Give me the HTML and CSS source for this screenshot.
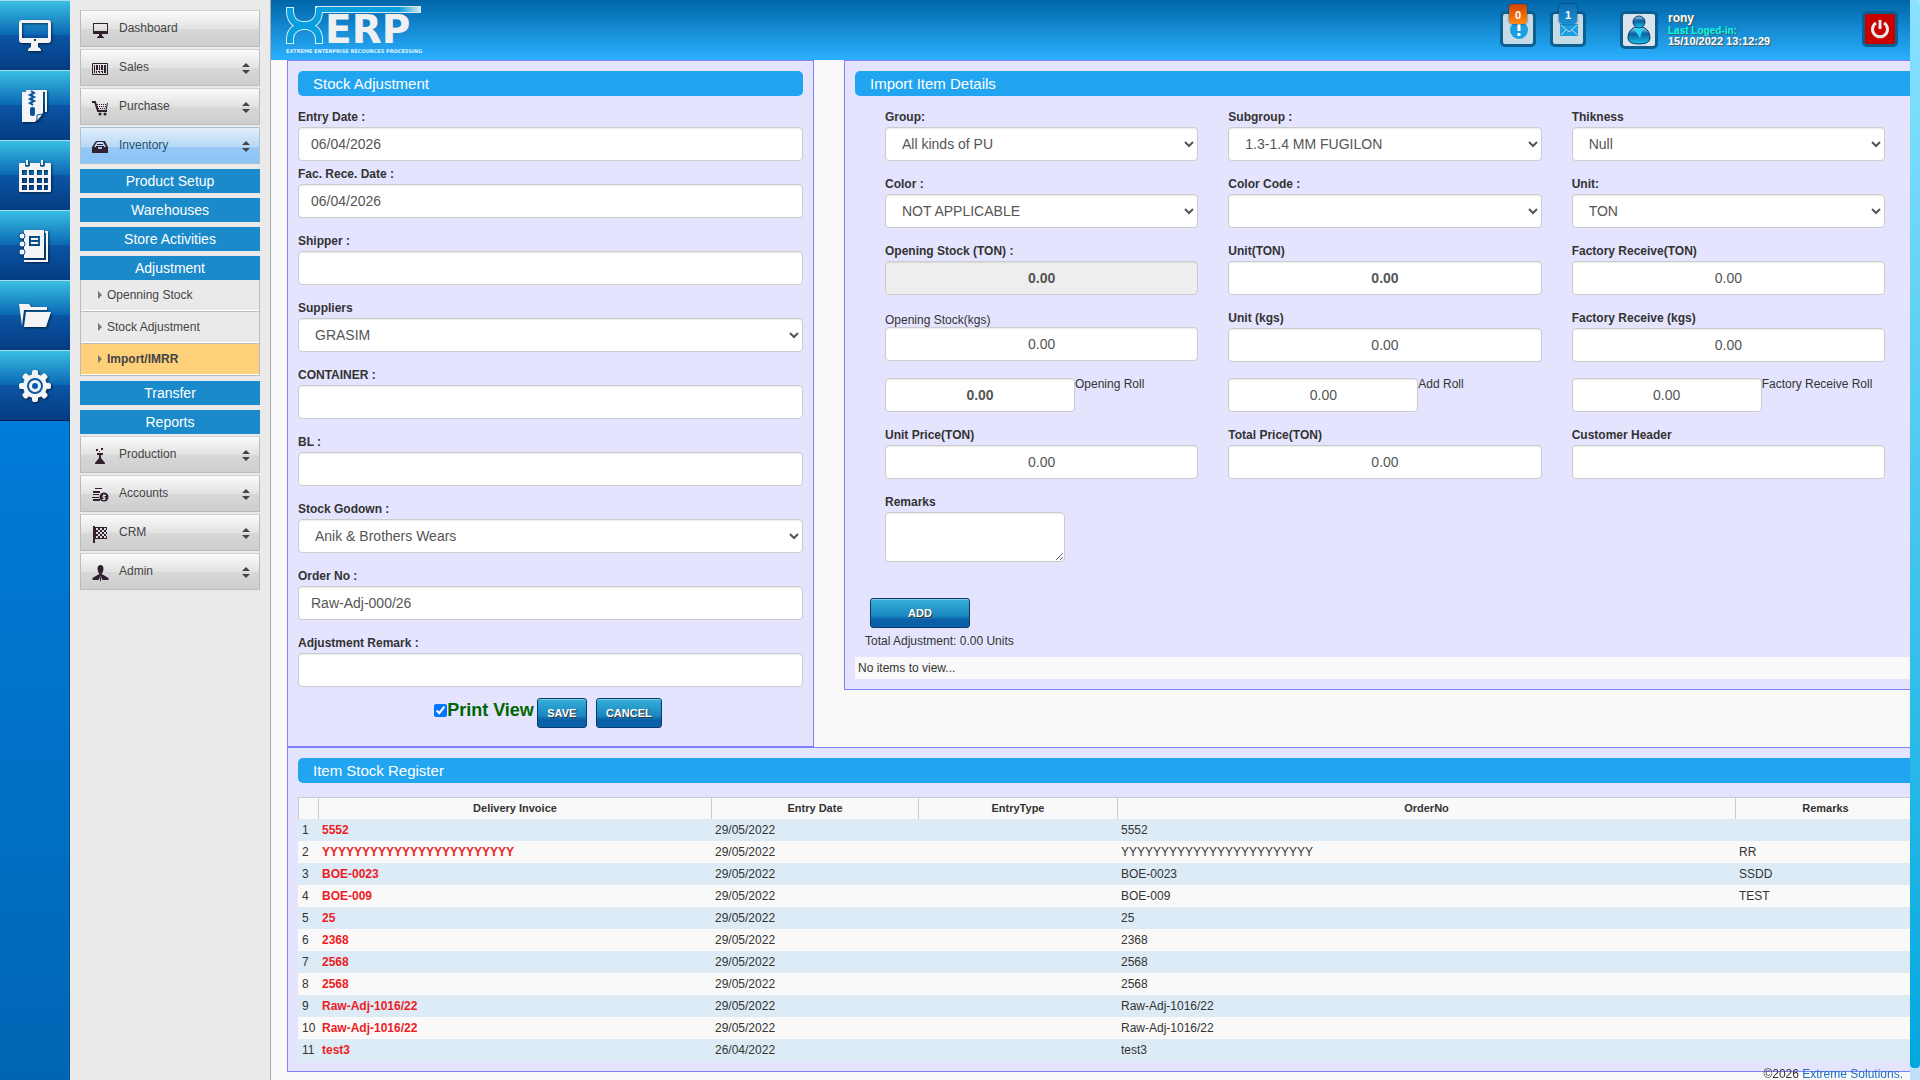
FILE: index.html
```html
<!DOCTYPE html>
<html lang="en">
<head>
  <meta charset="UTF-8">
  <title>XERP - Import/IMRR</title>
  <link rel="stylesheet" href="styles.css">
</head>
<body>
  <div class="page">
    <!-- Main icon bar -->
    <nav class="icon-bar">
      <a href="#" aria-label="Desktop"><svg width="34" height="34" viewBox="0 0 34 34"><path fill="#f4f4f6" fill-rule="evenodd" d="M4 1h26q3 0 3 3v17q0 3-3 3H20v4q3 1 3 4H10q0-3 3-4v-4H4q-3 0-3-3V4q0-3 3-3zM4 4v15h26V4zM16 20v2h2v-2z"/></svg></a>
      <a href="#" aria-label="Archive"><svg width="34" height="34" viewBox="0 0 34 34"><path fill="none" stroke="#f4f4f6" stroke-width="2" d="M8 2h20v21"/><path fill="#f4f4f6" d="M4 3h21v21l-8 9H4z"/><path fill="#f4f4f6" stroke="#0a529c" stroke-width="1" d="M19 32v-6l6-1z"/><path stroke="#0a529c" stroke-width="2" fill="none" d="M13 2l3 2-4 2 4 2-4 2 4 2-4 2 3 2"/><rect x="12" y="18" width="5" height="9" rx="2" fill="#0a529c"/></svg></a>
      <a href="#" aria-label="Calendar"><svg width="34" height="34" viewBox="0 0 34 34"><path fill="#f4f4f6" fill-rule="evenodd" d="M2 4h5v3q2 2 5 0V4h10v3q2 2 5 0V4h5q1 0 1 1v27q0 1-1 1H2q-1 0-1-1V5q0-1 1-1zM4 11v5h5v-5zm7 0v5h5v-5zm8 0v5h5v-5zm7 0v5h4v-5zM4 19v5h5v-5zm7 0v5h5v-5zm8 0v5h5v-5zm7 0v5h4v-5zM4 26v5h5v-5zm7 0v5h5v-5zm8 0v5h5v-5zm7 0v5h4v-5z"/><path stroke="#f4f4f6" stroke-width="2" d="M9 1v5M24 1v5"/></svg></a>
      <a href="#" aria-label="Address book"><svg width="34" height="34" viewBox="0 0 34 34"><path fill="#f4f4f6" fill-rule="evenodd" d="M6 1h20v28H6zM11 7v10h11V7z"/><path fill="none" stroke="#f4f4f6" stroke-width="2" d="M27 3h2v29H6"/><path stroke="#f4f4f6" stroke-width="2" d="M13 10h7M13 14h7"/><g fill="#f4f4f6" stroke="#0a529c" stroke-width="1"><circle cx="4" cy="7" r="3"/><circle cx="4" cy="15" r="3"/><circle cx="4" cy="23" r="3"/></g></svg></a>
      <a href="#" aria-label="Files"><svg width="34" height="34" viewBox="0 0 34 34"><path fill="#f4f4f6" d="M1 5h10l2 3h16v3H6L4 27z"/><path fill="#f4f4f6" d="M8 13h25l-5 15H6z"/></svg></a>
      <a href="#" aria-label="Settings"><svg width="34" height="34" viewBox="0 0 34 34"><g fill="#f4f4f6"><rect x="14" y="1" width="6" height="32" rx="2"/><rect x="14" y="1" width="6" height="32" rx="2" transform="rotate(45 17 17)"/><rect x="14" y="1" width="6" height="32" rx="2" transform="rotate(90 17 17)"/><rect x="14" y="1" width="6" height="32" rx="2" transform="rotate(135 17 17)"/><circle cx="17" cy="17" r="12"/></g><circle cx="17" cy="17" r="7" fill="none" stroke="#0a5ca8" stroke-width="2"/><circle cx="17" cy="17" r="3" fill="#0a5ca8"/></svg></a>
    </nav>

    <!-- Side menu -->
    <nav class="side-menu">
      <a href="#" class="menu-item"><svg class="menu-icon" viewBox="0 0 17 17"><path fill-rule="evenodd" d="M1 1h15v11H1zM2 2v7h13V2zM6 14h5v1h1v1H5v-1h1zM7 12h3v2H7z"/></svg>Dashboard</a>
      <a href="#" class="menu-item"><svg class="menu-icon" viewBox="0 0 17 17"><path fill="none" stroke="#33202f" d="M.5 2.5h15v11H.5z"/><path d="M2 4h1v8H2zM4 4h2v5H4zM7 4h1v5H7zM9 4h2v5H9zM12 4h2v8h-2zM4 10h1v2H4zM6 10h2v1H6zM9 10h2v1H9zM7 11h1v1H7zM10 11h1v1h-1z"/></svg>Sales<span class="arrows"></span></a>
      <a href="#" class="menu-item"><svg class="menu-icon" viewBox="0 0 17 17"><path fill="none" stroke="#33202f" stroke-width="2" d="M0 2h3l3 9h9"/><path fill="none" stroke="#33202f" stroke-dasharray="1 1" d="M5 4.500h10M5 6.500h10M6 8.500h8"/><path fill="none" stroke="#33202f" d="M15.500 3L14 10"/><circle cx="8" cy="14" r="1.500"/><circle cx="13" cy="14" r="1.500"/></svg>Purchase<span class="arrows"></span></a>
      <a href="#" class="menu-item active"><svg class="menu-icon" viewBox="0 0 17 17"><path fill-rule="evenodd" d="M4 2h9l3 6v6H0V8zM5 3L2 8h4v2h4V8h4l-3-5zM5 5h6v1H5zM4 7h8v1H4z"/></svg>Inventory<span class="arrows"></span></a>

      <a href="#" class="group-item">Product Setup</a>
      <a href="#" class="group-item">Warehouses</a>
      <a href="#" class="group-item">Store Activities</a>
      <a href="#" class="group-item">Adjustment</a>
      <div class="sub-menu">
        <a href="#">Openning Stock</a>
        <a href="#">Stock Adjustment</a>
        <a href="#" class="current">Import/IMRR</a>
      </div>
      <a href="#" class="group-item">Transfer</a>
      <a href="#" class="group-item">Reports</a>

      <a href="#" class="menu-item"><svg class="menu-icon" viewBox="0 0 17 17"><path d="M5 5h6v2H9v3l4 5v1H3v-1l4-5V7H5zM4 1h2v2H4zM9 0h2v2H9zM7 3h1v1H7z"/></svg>Production<span class="arrows"></span></a>
      <a href="#" class="menu-item"><svg class="menu-icon" viewBox="0 0 17 17"><path d="M3 1h7v1H3zM1 4h7v2H1zM1 7h6v1H1zM0 10h7v1H0zM1 12h7v2H1z"/><circle cx="12" cy="10" r="4.500"/><path fill="none" stroke="#ddd" d="M14 8.500h-3v2h2v2h-3M12 7v6"/></svg>Accounts<span class="arrows"></span></a>
      <a href="#" class="menu-item"><svg class="menu-icon" viewBox="0 0 17 17"><path d="M1 0h2v17H1zM3 1h12v12H3z"/><path fill="none" stroke="#ddd" stroke-width="2" stroke-dasharray="2 2" d="M4 3h10M6 5h9M4 7h10M6 9h9M4 11h10"/></svg>CRM<span class="arrows"></span></a>
      <a href="#" class="menu-item"><svg class="menu-icon" viewBox="0 0 17 17"><path d="M8.500 0q3 0 3 4 0 3-2 5l2 1 5 3v2h-6l-2-4-2 4h-6v-2l5-3 2-1q-2-2-2-5 0-4 3-4zM8 12h1v4H8z"/></svg>Admin<span class="arrows"></span></a>
    </nav>

    <main class="content">
      <header class="top-bar">
        <svg class="logo" width="156" height="60" viewBox="0 0 156 60" role="img" aria-label="XERP">
          <defs>
            <linearGradient id="bar" x1="0" x2="1"><stop offset="0" stop-color="#089fde"/><stop offset=".8" stop-color="#089fde"/><stop offset="1" stop-color="#d5e8f2"/></linearGradient>
          </defs>
          <g fill="none" stroke="#d8ecf6" stroke-width="8"><path d="M10 7v5q1 12 12 13h5q11-1 12-13V7M10 44v-6q1-10 12-12h5q11 2 12 12v6"/></g>
          <rect x="35" y="6" width="106" height="7" fill="#d5e8f2"/>
          <g fill="none" stroke="#089fde" stroke-width="6"><path d="M10 8v4q1 12 12 13h5q11-1 12-13V8M10 43v-5q1-10 12-12h5q11 2 12 12v5"/></g>
          <rect x="37" y="7" width="103" height="5" fill="url(#bar)"/>
          <text class="logo-text" x="45" y="43">ERP</text>
          <text class="logo-tag" x="6" y="53">EXTREME ENTERPRISE RECOURCES PROCESSING</text>
        </svg>

        <div class="top-tools">
          <a href="#" class="tool" aria-label="Notifications"><svg width="30" height="30" viewBox="0 0 30 30"><circle cx="16" cy="16" r="9" fill="#1a9fe0"/><path stroke="#fff" stroke-width="3" d="M16 10v7M16 19v3"/></svg><span class="badge orange">0</span></a>
          <a href="#" class="tool" aria-label="Messages"><svg width="30" height="30" viewBox="0 0 30 30"><rect x="7" y="10" width="18" height="12" fill="#1a9fe0"/><path fill="none" stroke="#c5dbe6" d="M8 11l8 7 8-7M8 21l5-5M24 21l-5-5"/></svg><span class="badge blue">1</span></a>
          <div class="avatar"><svg width="32" height="32" viewBox="0 0 32 32">
            <defs><linearGradient id="man" x2="0" y2="1"><stop offset="0" stop-color="#9fe0f6"/><stop offset=".4" stop-color="#0b5ea0"/><stop offset="1" stop-color="#19c5e8"/></linearGradient></defs>
            <path d="M5 24q0-8 7-11h8q7 3 7 11 0 6-11 6T5 24z" fill="url(#man)" stroke="#0a3768"/><circle cx="16" cy="8" r="6" fill="url(#man)" stroke="#0a3768"/><path d="M11 15l6 9 3-10z" fill="#26d7f4"/></svg></div>
          <div class="user-info">
            <strong>rony</strong>
            <span class="last">Last Loged-in:</span>
            <span>15/10/2022 13:12:29</span>
          </div>
          <a href="#" class="power" aria-label="Log out"><svg width="20" height="20" viewBox="0 0 20 20"><path fill="none" stroke="#e8e8e8" stroke-width="3" d="M6 4a7.500 7.500 0 1 0 8 0M10 1v9"/></svg></a>
        </div>
      </header>

      <div class="forms">
        <form class="panel">
          <h2>Stock Adjustment</h2>
          <div class="field tight"><label for="entry">Entry Date :</label><input type="text" id="entry" value="06/04/2026"></div>
          <div class="field"><label for="rece">Fac. Rece. Date :</label><input type="text" id="rece" value="06/04/2026"></div>
          <div class="field"><label for="shipper">Shipper :</label><input type="text" id="shipper"></div>
          <div class="field"><label for="suppliers">Suppliers</label><select id="suppliers"><option>GRASIM</option></select></div>
          <div class="field"><label for="container">CONTAINER :</label><input type="text" id="container"></div>
          <div class="field"><label for="bl">BL :</label><input type="text" id="bl"></div>
          <div class="field"><label for="godown">Stock Godown :</label><select id="godown"><option>Anik &amp; Brothers Wears</option></select></div>
          <div class="field"><label for="order">Order No :</label><input type="text" id="order" value="Raw-Adj-000/26"></div>
          <div class="field tight"><label for="remark">Adjustment Remark :</label><input type="text" id="remark"></div>
          <div class="actions">
            <div class="print"><input type="checkbox" id="print" checked><label for="print">Print View</label></div>
            <button type="button" class="btn">SAVE</button>
            <button type="button" class="btn cancel">CANCEL</button>
          </div>
        </form>

        <form class="panel">
          <h2>Import Item Details</h2>
          <div class="item-grid">
            <div class="field"><label for="group">Group:</label><select id="group"><option>All kinds of PU</option></select></div>
            <div class="field"><label for="subgroup">Subgroup :</label><select id="subgroup"><option>1.3-1.4 MM FUGILON</option></select></div>
            <div class="field"><label for="thikness">Thikness</label><select id="thikness"><option>Null</option></select></div>

            <div class="field"><label for="color">Color :</label><select id="color"><option>NOT APPLICABLE</option></select></div>
            <div class="field"><label for="code">Color Code :</label><select id="code"><option></option></select></div>
            <div class="field"><label for="unit">Unit:</label><select id="unit"><option>TON</option></select></div>

            <div class="field num"><label for="open-ton">Opening Stock (TON) :</label><input type="text" id="open-ton" class="bold" value="0.00" readonly></div>
            <div class="field num"><label for="unit-ton">Unit(TON)</label><input type="text" id="unit-ton" class="bold" value="0.00"></div>
            <div class="field num"><label for="fac-ton">Factory Receive(TON)</label><input type="text" id="fac-ton" value="0.00"></div>

            <div class="field num plain"><label for="open-kgs">Opening Stock(kgs)</label><input type="text" id="open-kgs" value="0.00"></div>
            <div class="field num"><label for="unit-kgs">Unit (kgs)</label><input type="text" id="unit-kgs" value="0.00"></div>
            <div class="field num"><label for="fac-kgs">Factory Receive (kgs)</label><input type="text" id="fac-kgs" value="0.00"></div>

            <div class="roll num"><input type="text" id="open-roll" class="bold" value="0.00"><label for="open-roll">Opening Roll</label></div>
            <div class="roll num"><input type="text" id="add-roll" value="0.00"><label for="add-roll">Add Roll</label></div>
            <div class="roll num"><input type="text" id="fac-roll" value="0.00"><label for="fac-roll">Factory Receive Roll</label></div>

            <div class="field num"><label for="unit-price">Unit Price(TON)</label><input type="text" id="unit-price" value="0.00"></div>
            <div class="field num"><label for="total-price">Total Price(TON)</label><input type="text" id="total-price" value="0.00"></div>
            <div class="field"><label for="customer">Customer Header</label><input type="text" id="customer"></div>

            <div class="field"><label for="remarks">Remarks</label><textarea id="remarks"></textarea></div>
          </div>
          <button type="button" class="btn add">ADD</button>
          <p class="total">Total Adjustment: 0.00 Units</p>
          <p class="empty">No items to view...</p>
        </form>
      </div>

      <section class="panel register">
        <h2>Item Stock Register</h2>
        <table>
          <colgroup><col class="c-no"><col class="c-invoice"><col class="c-date"><col class="c-type"><col class="c-order"><col></colgroup>
          <thead>
            <tr><th></th><th>Delivery Invoice</th><th>Entry Date</th><th>EntryType</th><th>OrderNo</th><th>Remarks</th></tr>
          </thead>
          <tbody>
            <tr><td>1</td><td><a href="#">5552</a></td><td>29/05/2022</td><td></td><td>5552</td><td></td></tr>
            <tr><td>2</td><td><a href="#">YYYYYYYYYYYYYYYYYYYYYYYY</a></td><td>29/05/2022</td><td></td><td>YYYYYYYYYYYYYYYYYYYYYYYY</td><td>RR</td></tr>
            <tr><td>3</td><td><a href="#">BOE-0023</a></td><td>29/05/2022</td><td></td><td>BOE-0023</td><td>SSDD</td></tr>
            <tr><td>4</td><td><a href="#">BOE-009</a></td><td>29/05/2022</td><td></td><td>BOE-009</td><td>TEST</td></tr>
            <tr><td>5</td><td><a href="#">25</a></td><td>29/05/2022</td><td></td><td>25</td><td></td></tr>
            <tr><td>6</td><td><a href="#">2368</a></td><td>29/05/2022</td><td></td><td>2368</td><td></td></tr>
            <tr><td>7</td><td><a href="#">2568</a></td><td>29/05/2022</td><td></td><td>2568</td><td></td></tr>
            <tr><td>8</td><td><a href="#">2568</a></td><td>29/05/2022</td><td></td><td>2568</td><td></td></tr>
            <tr><td>9</td><td><a href="#">Raw-Adj-1016/22</a></td><td>29/05/2022</td><td></td><td>Raw-Adj-1016/22</td><td></td></tr>
            <tr><td>10</td><td><a href="#">Raw-Adj-1016/22</a></td><td>29/05/2022</td><td></td><td>Raw-Adj-1016/22</td><td></td></tr>
            <tr><td>11</td><td><a href="#">test3</a></td><td>26/04/2022</td><td></td><td>test3</td><td></td></tr>
          </tbody>
        </table>
      </section>
    </main>

    <div class="scroll-track"><div class="scroll-thumb"></div></div>
  </div>

  <footer>©2026 <a href="#">Extreme Solutions.</a></footer>
</body>
</html>
```
FILE: styles.css
```css
* {
  box-sizing: border-box;
}

body {
  margin: 0;
  font-family: "Liberation Sans", Arial, sans-serif;
  font-size: 12px;
  line-height: 18px;
  color: #333;
  background: #f9f9f9;
}

a {
  color: inherit;
  text-decoration: none;
}

.page {
  display: flex;
  min-height: 100vh;
}

/* icon bar */
.icon-bar {
  flex: 0 0 70px;
  background: linear-gradient(#008af0, #0066b4);
  box-shadow: inset -1px 0 #00509a;
}

.icon-bar a {
  display: flex;
  align-items: center;
  justify-content: center;
  height: 70px;
  border-top: 1px solid #a9dcf2;
  background: linear-gradient(#38bfe2, #0b68b4 49%, #0b55a4 50%, #043c82);
}

.icon-bar a:last-child {
  height: 71px;
  border-bottom: 1px solid #04224a;
}

.icon-bar svg {
  filter: drop-shadow(1px 1px 1px rgba(0, 0, 0, 0.6));
}

/* side menu */
.side-menu {
  flex: 0 0 201px;
  padding: 10px 10px 0;
  background: #eaeaea;
  border-right: 1px solid #aaa;
}

.menu-item {
  display: flex;
  align-items: center;
  height: 37px;
  margin-bottom: 2px;
  padding: 0 9px 2px 11px;
  border: 1px solid #bbb;
  border-top-color: #d0d0d0;
  background: linear-gradient(#fbfbfb, #e2e2e2 50%, #d8d8d8 51%, #cecece);
  color: #444;
}

.menu-item.active {
  margin-bottom: 5px;
  border-color: #a9c4d0;
  background: linear-gradient(#e2effa, #b5d7f5 55%, #95c8f6 56%, #8cc3f7);
  color: #1b5272;
}

.menu-icon {
  width: 17px;
  height: 17px;
  margin: 5px 10px 0 0;
  fill: #33202f;
}

.arrows {
  margin: 4px 0 0 auto;
}

.arrows::before,
.arrows::after {
  content: '';
  display: block;
  border: 4px solid transparent;
  border-top-width: 0;
  border-bottom-color: #444;
}

.arrows::after {
  margin-top: 3px;
  border-width: 4px 4px 0;
  border-top-color: #444;
}

.group-item {
  display: block;
  height: 24px;
  margin-bottom: 5px;
  background: #1a8acb;
  color: #fff;
  font-size: 14px;
  line-height: 24px;
  text-align: center;
}

.group-item:has(+ .sub-menu) {
  margin-bottom: 0;
}

.group-item:has(+ .menu-item) {
  margin-bottom: 2px;
}

.sub-menu {
  margin-bottom: 5px;
  border: 1px solid #bbb;
  border-width: 0 1px;
}

.sub-menu a {
  display: flex;
  align-items: center;
  gap: 5px;
  height: 32px;
  padding: 0 0 2px 17px;
  border-bottom: 1px solid #bbb;
  box-shadow: inset 0 -1px #fff;
  color: #444;
}

.sub-menu a::before {
  content: '';
  border: 4px solid transparent;
  border-left-color: #777;
  border-right-width: 0;
}

.sub-menu .current {
  background: #ffd07a;
  font-weight: bold;
}

/* header */
.content {
  flex: 1;
  min-width: 0;
  overflow: hidden;
}

.top-bar {
  display: flex;
  justify-content: space-between;
  height: 60px;
  padding: 0 12px 0 9px;
  background: linear-gradient(#0066a8, #2bb0ff);
}

.logo-text {
  font: bold 39px "DejaVu Sans", sans-serif;
  fill: #f0f0f2;
}

.logo-tag {
  font: bold 5px "DejaVu Sans", sans-serif;
  fill: #dff2ff;
}

.top-tools {
  display: flex;
  align-items: flex-start;
  padding-top: 11px;
}

.tool {
  position: relative;
  width: 36px;
  height: 36px;
  margin-right: 14px;
  border: 3px solid #0a6090;
  border-radius: 5px;
  background: #c5dbe6;
}

.tool svg {
  display: block;
}

.badge {
  position: absolute;
  top: -10px;
  left: 6px;
  width: 18px;
  height: 20px;
  border-radius: 4px;
  color: #fff;
  font-size: 11px;
  font-weight: bold;
  line-height: 22px;
  text-align: center;
  box-shadow: 0 0 2px #024;
}

.badge.orange {
  background: linear-gradient(#d04000, #ff8a10);
}

.badge.blue {
  background: linear-gradient(#0a6cab, #1f8fd6);
}

.avatar {
  width: 38px;
  height: 38px;
  margin: 0 10px 0 20px;
  border: 3px solid #0a6090;
  border-radius: 5px;
  background: #d9e4ec;
}

.user-info {
  display: flex;
  flex-direction: column;
  width: 194px;
  color: #fff;
  font-size: 11px;
  font-weight: bold;
  line-height: 11px;
  text-shadow: 1px 1px 1px #555;
}

.user-info strong {
  font-size: 12px;
  line-height: 14px;
}

.user-info .last {
  color: #0fe;
  font-size: 10px;
}

.power {
  display: flex;
  align-items: center;
  justify-content: center;
  width: 36px;
  height: 36px;
  border: 3px solid #0a6090;
  border-radius: 5px;
  background: #c80000;
}

/* panels run past the right edge of the content area */
.forms {
  display: flex;
  gap: 30px;
  width: 100%;
  margin-left: 16px;
}

.panel {
  flex: 1;
  align-self: flex-start;
  padding: 10px;
  border: 1px solid #8080ff;
  background: #e5e4ff;
}

.forms .panel:first-child {
  flex: 0 0 527px;
}

.panel h2 {
  margin: 0 0 12px;
  padding-left: 15px;
  border-radius: 5px;
  background: #22a5f1;
  color: #fff;
  font-size: 15px;
  font-weight: normal;
  line-height: 25px;
}

.field {
  display: flex;
  flex-direction: column;
  margin-bottom: 14px;
}

.field.tight {
  margin-bottom: 4px;
}

.field label {
  margin-bottom: 1px;
  font-weight: bold;
}

.field input,
.field select,
.field textarea,
.roll input {
  width: 100%;
  height: 34px;
  padding: 6px 12px;
  border: 1px solid #ccc;
  border-radius: 4px;
  background: #fff;
  box-shadow: inset 0 1px 1px rgba(0, 0, 0, 0.08);
  color: #555;
  font: 14px "Liberation Sans", Arial, sans-serif;
}

.field textarea {
  width: 180px;
  height: 50px;
}

.num input {
  text-align: center;
}

.field input.bold,
.roll input.bold {
  font-weight: bold;
}

.field input[readonly] {
  background: #eee;
}

.item-grid {
  display: grid;
  grid-template-columns: repeat(3, 1fr);
  column-gap: 30px;
  padding: 0 30px;
}

.field.plain {
  padding-top: 4px;
}

.field.plain label {
  margin-bottom: 0;
  font-weight: normal;
  line-height: 14px;
}

.roll {
  display: flex;
  margin: 2px 0 14px;
}

.roll input {
  width: 190px;
}

.roll label {
  line-height: 12px;
}

.btn {
  width: 50px;
  height: 30px;
  padding: 0;
  border: 1px solid #0a3a6c;
  border-radius: 3px;
  background: linear-gradient(#35b0d8, #1a86c0 60%, #0a5ea6 75%, #0a62aa);
  box-shadow: inset 0 1px #7fcbe8;
  color: #fff;
  font: bold 11px "Liberation Sans", Arial, sans-serif;
  text-shadow: 1px 1px #333;
}

.btn.cancel {
  width: 66px;
  margin-left: 6px;
}

.btn.add {
  width: 100px;
  margin: 22px 0 0 15px;
}

.actions {
  display: flex;
  justify-content: center;
  gap: 3px;
  padding: 7px 5px 8px 0;
}

.print {
  display: flex;
  align-items: center;
  height: 24px;
}

.print input {
  margin: 0;
}

.print label {
  color: #060;
  font-size: 18px;
  font-weight: bold;
}

.total {
  margin: 4px 0 7px 10px;
}

.empty {
  margin: 0;
  padding: 2px 3px;
  background: #f9f9f9;
}

/* register */
.register {
  width: 100%;
  margin-left: 16px;
}

.register h2 {
  margin-bottom: 14px;
}

table {
  width: 100%;
  table-layout: fixed;
  border-collapse: separate;
  border-spacing: 0;
}

.c-no {
  width: 20px;
}

.c-invoice {
  width: 393px;
}

.c-date {
  width: 207px;
}

.c-type {
  width: 199px;
}

.c-order {
  width: 618px;
}

th {
  height: 22px;
  padding: 0 0 2px;
  border-top: 1px solid #ccc;
  border-left: 1px solid #ccc;
  background: #f9f9f9;
  font-size: 11px;
}

td {
  height: 22px;
  padding: 0 4px;
  white-space: nowrap;
}

tbody tr {
  background: #f9f9f9;
}

tbody tr:nth-child(odd) {
  background: #ddebf6;
}

td a {
  color: #ed1c24;
  font-weight: bold;
}

/* page scrollbar */
.scroll-track {
  flex: 0 0 10px;
  padding-bottom: 12px;
  background: #bfe1f8;
}

.scroll-thumb {
  height: 100%;
  border-radius: 4px;
  background: linear-gradient(#8ae2ff, #00a8e0);
}

footer {
  position: fixed;
  right: 17px;
  bottom: -2px;
  line-height: 16px;
}

footer a {
  color: #1b6fc8;
}
```
